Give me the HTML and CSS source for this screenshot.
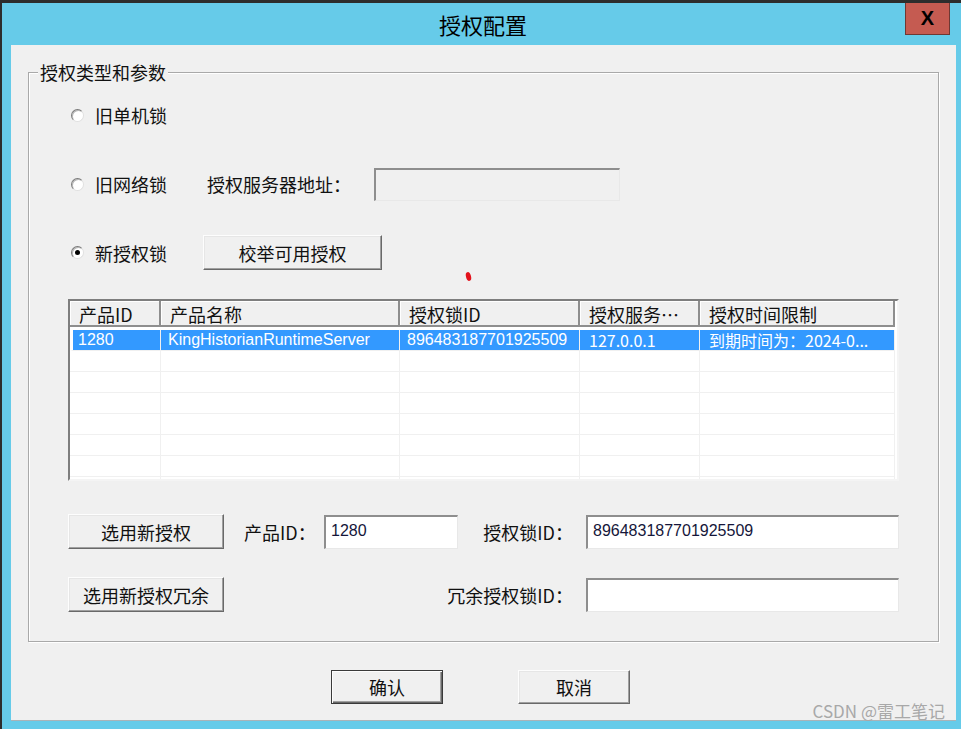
FILE: index.html
```html
<!DOCTYPE html>
<html lang="zh-CN">
<head>
<meta charset="utf-8">
<title>授权配置</title>
<link rel="stylesheet" href="styles.css">
</head>
<body>
<div class="screen">
  <div class="titlebar">
    <span class="title">授权配置</span>
    <div class="close">X</div>
  </div>
  <div class="client">
    <div class="group">
      <span class="legend">授权类型和参数</span>
      <span class="reddot"></span>
      <div class="row r1">
        <label class="radio"><span class="circle"></span><span>旧单机锁</span></label>
      </div>
      <div class="row r2">
        <label class="radio"><span class="circle"></span><span>旧网络锁</span></label>
        <span class="lbl server">授权服务器地址：</span>
        <div class="input disabled server-input"></div>
      </div>
      <div class="row r3">
        <label class="radio"><span class="circle checked"></span><span>新授权锁</span></label>
        <div class="btn enum">校举可用授权</div>
      </div>
      <div class="table">
        <div class="thead">
          <div class="th">产品ID</div>
          <div class="th">产品名称</div>
          <div class="th">授权锁ID</div>
          <div class="th">授权服务…</div>
          <div class="th">授权时间限制</div>
        </div>
        <div class="tr selected">
          <div class="td">1280</div>
          <div class="td">KingHistorianRuntimeServer</div>
          <div class="td">896483187701925509</div>
          <div class="td cjk">127.0.0.1</div>
          <div class="td cjk">到期时间为：2024-0...</div>
        </div>
        <div class="tr"><div class="td"></div><div class="td"></div><div class="td"></div><div class="td"></div><div class="td"></div></div>
        <div class="tr"><div class="td"></div><div class="td"></div><div class="td"></div><div class="td"></div><div class="td"></div></div>
        <div class="tr"><div class="td"></div><div class="td"></div><div class="td"></div><div class="td"></div><div class="td"></div></div>
        <div class="tr"><div class="td"></div><div class="td"></div><div class="td"></div><div class="td"></div><div class="td"></div></div>
        <div class="tr"><div class="td"></div><div class="td"></div><div class="td"></div><div class="td"></div><div class="td"></div></div>
        <div class="tr"><div class="td"></div><div class="td"></div><div class="td"></div><div class="td"></div><div class="td"></div></div>
        <div class="tr"><div class="td"></div><div class="td"></div><div class="td"></div><div class="td"></div><div class="td"></div></div>
      </div>
      <div class="form">
        <div class="btn">选用新授权</div>
        <span class="lbl pid">产品ID：</span>
        <div class="input"><span class="val">1280</span></div>
        <span class="lbl right">授权锁ID：</span>
        <div class="input"><span class="val">896483187701925509</span></div>
        <div class="btn">选用新授权冗余</div>
        <span class="lbl right wide">冗余授权锁ID：</span>
        <div class="input"></div>
      </div>
    </div>
    <div class="footer">
      <div class="btn default">确认</div>
      <div class="btn">取消</div>
    </div>
  </div>
  <div class="watermark">CSDN @雷工笔记</div>
</div>
</body>
</html>
```

FILE: styles.css
```css
html, body {
  margin: 0;
  padding: 0;
}
body {
  font-family: "Noto Sans CJK SC", "Liberation Sans", sans-serif;
  color: #111;
  font-size: 18px;
}
.screen {
  position: relative;
  width: 961px;
  height: 729px;
  box-sizing: border-box;
  border-top: 3px solid #2d2d2d;
  border-left: 2px solid #2d2d2d;
  background: #66cbe9;
  overflow: hidden;
}
.titlebar {
  position: relative;
  height: 42px;
  display: flex;
  align-items: center;
  justify-content: center;
  padding-left: 3px;
}
.title {
  font-size: 22px;
  line-height: 26px;
  color: #000;
}
.close {
  position: absolute;
  top: 0;
  right: 11px;
  width: 43px;
  height: 31px;
  background: #c55b51;
  border: 1px solid #6f3833;
  border-top: none;
  display: flex;
  align-items: center;
  justify-content: center;
  font-family: "Liberation Sans", sans-serif;
  font-weight: bold;
  font-size: 20px;
  color: #000;
}
.client {
  margin-left: 9px;
  width: 945px;
  height: 676px;
  background: #f0f0f0;
  overflow: hidden;
  box-sizing: border-box;
  padding-top: 27px;
  border-bottom: 1px solid #a9b3b8;
}
.group {
  position: relative;
  margin-left: 17px;
  width: 911px;
  box-sizing: border-box;
  border: 1px solid #a9a9a9;
  box-shadow: inset 1px 1px 0 #fff, 1px 1px 0 #fff;
  padding: 26px 0 29px 39px;
}
.legend {
  position: absolute;
  top: -11px;
  left: 9px;
  padding: 0 2px;
  background: #f0f0f0;
  font-size: 18px;
  line-height: 20px;
}
.reddot {
  position: absolute;
  left: 437px;
  top: 199px;
  width: 5px;
  height: 9px;
  border-radius: 50%;
  background: #e3121c;
  transform: rotate(-15deg);
}
.row {
  display: flex;
  align-items: center;
  height: 34px;
}
.r1 { margin-top: -1px; }
.r2 { margin-top: 35px; }
.r3 { margin-top: 34px; height: 35px; }
.radio {
  display: flex;
  align-items: center;
  gap: 11px;
  width: 132px;
  margin-left: 3px;
  box-sizing: border-box;
  line-height: 22px;
}
.circle {
  position: relative;
  width: 13px;
  height: 13px;
  box-sizing: border-box;
  border-radius: 50%;
  background: #fff;
  border: 1px solid;
  border-color: #7a7a7a #e0e0e0 #e0e0e0 #7a7a7a;
  box-shadow: inset 1px 1px 0 #b8b8b8;
}
.circle.checked::after {
  content: "";
  position: absolute;
  left: 3px;
  top: 3px;
  width: 5px;
  height: 5px;
  border-radius: 50%;
  background: #000;
}
.lbl {
  line-height: 22px;
  white-space: nowrap;
}
.server { margin-left: 4px; }
.input {
  box-sizing: border-box;
  height: 35px;
  background: #fff;
  border-top: 2px solid #8e8e8e;
  border-left: 2px solid #8e8e8e;
  border-bottom: 1px solid #e8e8e8;
  border-right: 1px solid #e8e8e8;
  display: flex;
  align-items: center;
  padding: 0 0 3px 5px;
}
.input.disabled { background: #f0f0f0; }
.server-input {
  margin-left: 23px;
  width: 246px;
  height: 33px;
}
.val {
  font-family: "Liberation Sans", sans-serif;
  font-size: 16px;
  color: #15163a;
}
.btn {
  box-sizing: border-box;
  height: 35px;
  background: #f0f0f0;
  border: 1px solid;
  border-color: #fdfdfd #696969 #696969 #fdfdfd;
  box-shadow: inset -1px -1px 0 #a0a0a0, inset 1px 1px 0 #e6e6e6;
  display: flex;
  align-items: center;
  justify-content: center;
  line-height: 22px;
  white-space: nowrap;
}
.enum { width: 179px; }
.table {
  margin-top: 29px;
  width: 831px;
  height: 182px;
  box-sizing: border-box;
  border: 2px solid;
  border-color: #7e7e7e #f4f4f4 #f4f4f4 #7e7e7e;
  background: #fff;
  overflow: hidden;
}
.thead, .tr {
  display: grid;
  grid-template-columns: 91px 239px 180px 120px 195px;
}
.th {
  box-sizing: border-box;
  height: 26px;
  background: #f0f0f0;
  border-right: 2px solid #8e8e8e;
  border-bottom: 2px solid #8e8e8e;
  box-shadow: inset 1px 1px 0 #fff;
  padding: 2px 0 0 9px;
  font-size: 18px;
  line-height: 22px;
  white-space: nowrap;
}
.thead { margin-bottom: 3px; }
.td {
  box-sizing: border-box;
  height: 21px;
  border-right: 1px solid #f0f0f0;
  border-bottom: 1px solid #f0f0f0;
  padding-left: 7px;
  font-family: "Liberation Sans", sans-serif;
  font-size: 16px;
  line-height: 20px;
  white-space: nowrap;
}
.td.cjk {
  font-family: "Noto Sans CJK SC", sans-serif;
  font-size: 16px;
  padding-left: 9px;
}
.tr.selected .td {
  background: #3399ff;
  color: #fff;
}
.tr.selected .td:first-child { border-left: 3px solid #fff; padding-left: 5px; }
.form {
  margin-top: 33px;
  display: grid;
  grid-template-columns: 156px 100px 134px 128px 313px;
  grid-template-rows: 35px 35px;
  row-gap: 28px;
  align-items: center;
}
.form .input { height: 34px; }
.pid { padding-left: 20px; }
.right {
  text-align: right;
  padding-right: 13px;
}
.wide { grid-column: 2 / 5; }
.footer {
  display: flex;
  gap: 75px;
  padding-left: 320px;
  margin-top: 28px;
}
.footer .btn {
  width: 112px;
  height: 34px;
}
.footer .btn.default {
  border: 1px solid #3a3a3a;
  box-shadow: inset 1px 1px 0 #fdfdfd, inset -1px -1px 0 #696969, inset -2px -2px 0 #a0a0a0;
}
.watermark {
  position: absolute;
  right: 16px;
  bottom: 8px;
  font-size: 17px;
  line-height: 20px;
  color: #a8a8a8;
}
```
